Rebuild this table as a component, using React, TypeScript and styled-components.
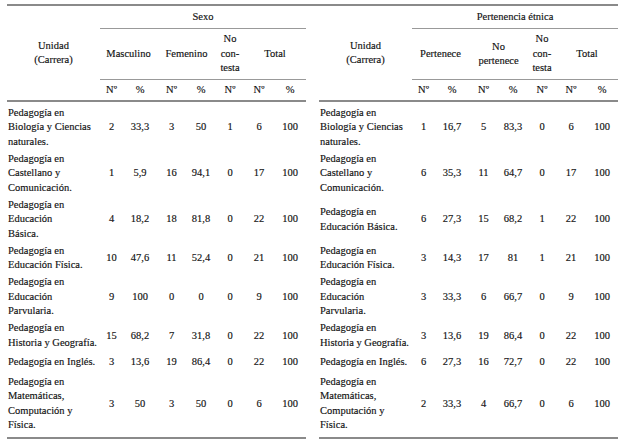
import { Fragment } from 'react'
import styled, { createGlobalStyle } from 'styled-components'

const LINE = 14.5

const GlobalStyle = createGlobalStyle`
  body {
    margin: 0;
    background: #fff;
  }
`

const Page = styled.div`
  padding: 4px 0 0 7px;
`

const Frame = styled.div`
  display: inline-flex;
  gap: 13px;
  border-top: 2px solid #8a8a8a;
`

const Table = styled.table`
  width: 299px;
  table-layout: fixed;
  border-collapse: separate;
  border-spacing: 0;
  border-bottom: 2px solid #8a8a8a;
  font-family: 'Liberation Serif', 'Times New Roman', serif;
  font-size: 10.5px;
  line-height: ${LINE}px;
  color: #111;
  -webkit-text-stroke: 0.15px #111;
`

const HeadRow = styled.tr<{ $h: number }>`
  height: ${({ $h }) => $h}px;
`

const HeadCell = styled.th<{ $rule?: boolean; $thick?: boolean }>`
  padding: 0;
  font-weight: 400;
  text-align: center;
  vertical-align: middle;
  white-space: nowrap;
  border-bottom: ${({ $rule, $thick }) =>
    $thick ? '2px solid #8a8a8a' : $rule ? '1px solid #999' : 'none'};
`

const BodyRow = styled.tr<{ $h: number }>`
  height: ${({ $h }) => $h}px;

  &:first-child > td {
    padding-top: 3.75px;
  }

  &:last-child > td {
    padding-bottom: 4.25px;
  }
`

const LabelCell = styled.td`
  padding: 1.25px 0 1.25px 1px;
  text-align: left;
  vertical-align: middle;
  white-space: nowrap;
`

const NumCell = styled.td`
  padding: 1.25px 0;
  text-align: center;
  vertical-align: middle;
  white-space: nowrap;
`

const COLS = [93, 23, 34, 29, 30, 28, 30, 32]

// line counts are shared so both tables keep the same row heights
const ROWS = [
  { lines: 3, extra: 2.5 },
  { lines: 3, extra: 0 },
  { lines: 3, extra: 0 },
  { lines: 2, extra: 0 },
  { lines: 3, extra: 0 },
  { lines: 2, extra: 0 },
  { lines: 1, extra: 5 },
  { lines: 4, extra: 3 },
]

type Row = { label: string[]; values: string[] }

const sexo: Row[] = [
  { label: ['Pedagogía en', 'Biología y Ciencias', 'naturales.'], values: ['2', '33,3', '3', '50', '1', '6', '100'] },
  { label: ['Pedagogía en', 'Castellano y', 'Comunicación.'], values: ['1', '5,9', '16', '94,1', '0', '17', '100'] },
  { label: ['Pedagogía en', 'Educación', 'Básica.'], values: ['4', '18,2', '18', '81,8', '0', '22', '100'] },
  { label: ['Pedagogía en', 'Educación Física.'], values: ['10', '47,6', '11', '52,4', '0', '21', '100'] },
  { label: ['Pedagogía en', 'Educación', 'Parvularia.'], values: ['9', '100', '0', '0', '0', '9', '100'] },
  { label: ['Pedagogía en', 'Historia y Geografía.'], values: ['15', '68,2', '7', '31,8', '0', '22', '100'] },
  { label: ['Pedagogía en Inglés.'], values: ['3', '13,6', '19', '86,4', '0', '22', '100'] },
  { label: ['Pedagogía en', 'Matemáticas,', 'Computación y', 'Física.'], values: ['3', '50', '3', '50', '0', '6', '100'] },
]

const etnia: Row[] = [
  { label: ['Pedagogía en', 'Biología y Ciencias', 'naturales.'], values: ['1', '16,7', '5', '83,3', '0', '6', '100'] },
  { label: ['Pedagogía en', 'Castellano y', 'Comunicación.'], values: ['6', '35,3', '11', '64,7', '0', '17', '100'] },
  { label: ['Pedagogía en', 'Educación Básica.'], values: ['6', '27,3', '15', '68,2', '1', '22', '100'] },
  { label: ['Pedagogía en', 'Educación Física.'], values: ['3', '14,3', '17', '81', '1', '21', '100'] },
  { label: ['Pedagogía en', 'Educación', 'Parvularia.'], values: ['3', '33,3', '6', '66,7', '0', '9', '100'] },
  { label: ['Pedagogía en', 'Historia y Geografía.'], values: ['3', '13,6', '19', '86,4', '0', '22', '100'] },
  { label: ['Pedagogía en Inglés.'], values: ['6', '27,3', '16', '72,7', '0', '22', '100'] },
  { label: ['Pedagogía en', 'Matemáticas,', 'Computación y', 'Física.'], values: ['2', '33,3', '4', '66,7', '0', '6', '100'] },
]

const lines = (parts: string[]) =>
  parts.map((p, i) => (
    <Fragment key={i}>
      {i > 0 && <br />}
      {p}
    </Fragment>
  ))

interface GroupTableProps {
  title: string
  groups: string[][]
  rows: Row[]
}

const GroupTable = ({ title, groups, rows }: GroupTableProps) => (
  <Table>
    <colgroup>
      {COLS.map((w, i) => (
        <col key={i} style={{ width: w }} />
      ))}
    </colgroup>
    <thead>
      <HeadRow $h={23}>
        <HeadCell rowSpan={3} $thick>
          Unidad
          <br />
          (Carrera)
        </HeadCell>
        <HeadCell colSpan={7} $rule>
          {title}
        </HeadCell>
      </HeadRow>
      <HeadRow $h={51}>
        <HeadCell colSpan={2} $rule>
          {lines(groups[0])}
        </HeadCell>
        <HeadCell colSpan={2} $rule>
          {lines(groups[1])}
        </HeadCell>
        <HeadCell $rule>{lines(['No', 'con-', 'testa'])}</HeadCell>
        <HeadCell colSpan={2} $rule>
          Total
        </HeadCell>
      </HeadRow>
      <HeadRow $h={22}>
        {['Nº', '%', 'Nº', '%', 'Nº', 'Nº', '%'].map((h, i) => (
          <HeadCell key={i} $thick>
            {h}
          </HeadCell>
        ))}
      </HeadRow>
    </thead>
    <tbody>
      {rows.map((row, r) => (
        <BodyRow key={r} $h={ROWS[r].lines * LINE + 2.5 + ROWS[r].extra}>
          <LabelCell>{lines(row.label)}</LabelCell>
          {row.values.map((v, i) => (
            <NumCell key={i}>{v}</NumCell>
          ))}
        </BodyRow>
      ))}
    </tbody>
  </Table>
)

export default function App() {
  return (
    <>
      <GlobalStyle />
      <Page>
        <Frame>
          <GroupTable title="Sexo" groups={[['Masculino'], ['Femenino']]} rows={sexo} />
          <GroupTable
            title="Pertenencia étnica"
            groups={[['Pertenece'], ['No', 'pertenece']]}
            rows={etnia}
          />
        </Frame>
      </Page>
    </>
  )
}
